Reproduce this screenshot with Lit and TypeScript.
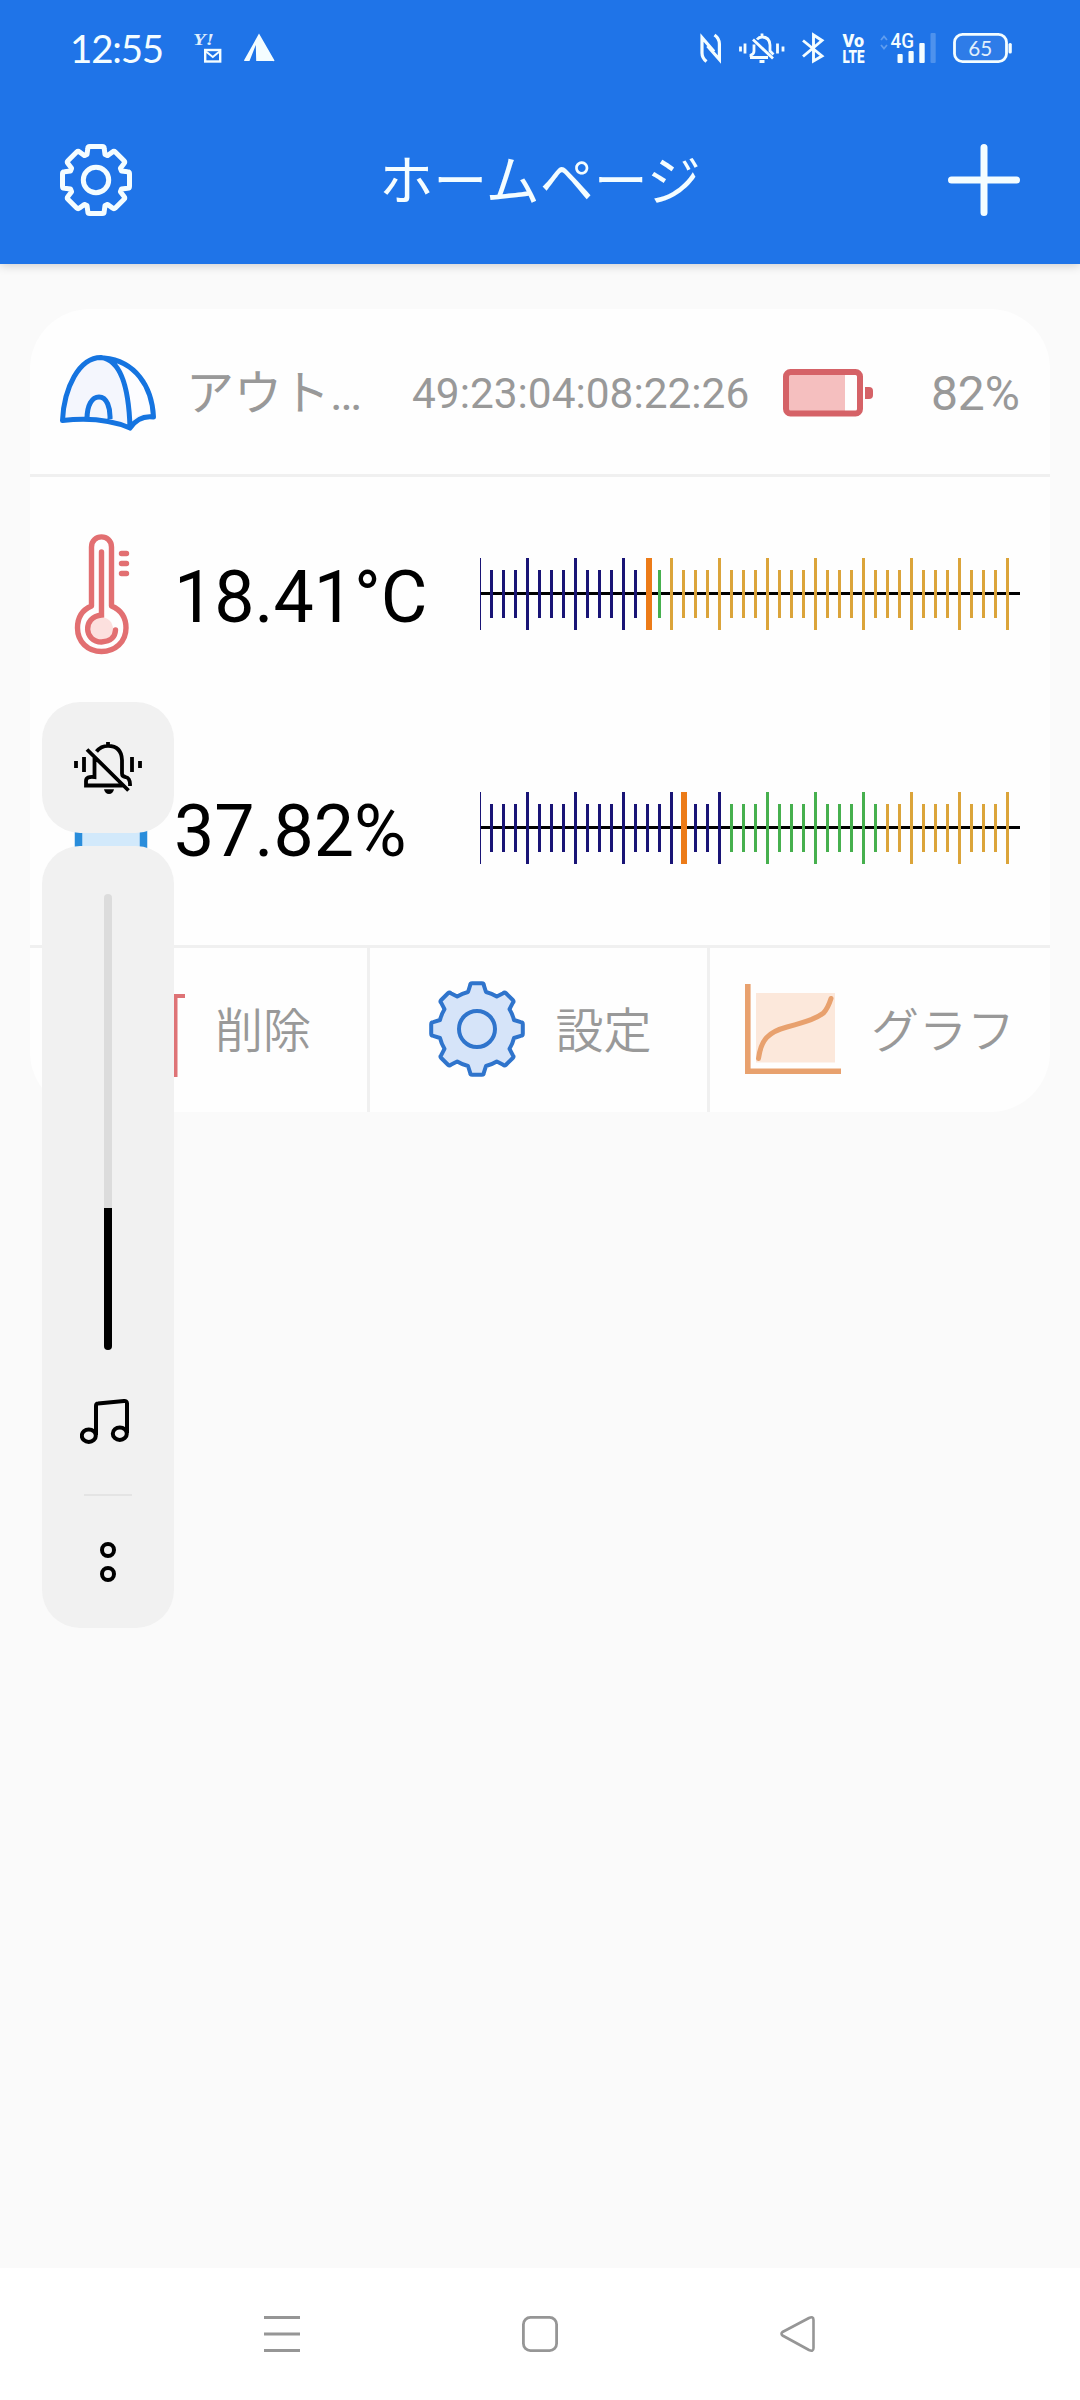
import { LitElement, html, css, svg } from "lit";
import { customElement, property } from "lit/decorators.js";

const TEETH = [0, 45, 90, 135, 180, 225, 270, 315];

/** Outline of an eight-toothed gear around the origin. */
function gearPath(top: number, topHalf: number, base: number, baseHalf: number, arc: boolean): string {
  const at = (x: number, y: number, deg: number) => {
    const a = (deg * Math.PI) / 180;
    const px = x * Math.cos(a) - y * Math.sin(a);
    const py = x * Math.sin(a) + y * Math.cos(a);
    return `${px.toFixed(2)} ${py.toFixed(2)}`;
  };
  const r = Math.hypot(base, baseHalf).toFixed(2);
  const parts = TEETH.map((deg, i) => {
    const start = at(-baseHalf, -base, deg);
    const lead = i === 0 ? `M${start}` : arc ? `A${r} ${r} 0 0 1 ${start}` : `L${start}`;
    return `${lead}L${at(-topHalf, -top + 2, deg)}Q${at(-topHalf, -top, deg)} ${at(-topHalf + 2, -top, deg)}L${at(topHalf - 2, -top, deg)}Q${at(topHalf, -top, deg)} ${at(topHalf, -top + 2, deg)}L${at(baseHalf, -base, deg)}`;
  });
  const close = arc ? `A${r} ${r} 0 0 1 ${at(-baseHalf, -base, 0)}` : "";
  return parts.join("") + close + "Z";
}

@customElement("status-bar")
class StatusBar extends LitElement {
  static styles = css`
    :host { display: block; height: 96px; color: #f4fdff; }
    .bar { display: flex; align-items: center; height: 96px; padding: 0 68px 0 70px; box-sizing: border-box; }
    .time { font: 38.5px/48px Lato, sans-serif; letter-spacing: -1.2px; width: 122px; }
    .right { display: flex; align-items: center; margin-left: auto; }
    svg { display: block; overflow: visible; }
    .tent { margin-left: 21px; }
    .nfc { margin-right: 17px; }
    .bell { margin-right: 17px; }
    .bt { margin-right: 18px; }
    .volte { margin-right: 15px; }
    .signal { margin-right: 17px; }
    .line { fill: none; stroke: currentColor; }
  `;
  render() {
    return html`<div class="bar">
      <span class="time">12:55</span>
      <svg width="30" height="30" viewBox="192 33 30 30" fill="currentColor">
        <text x="193" y="45" font-family="Liberation Serif, serif" font-weight="bold" font-style="italic" font-size="17" textLength="21" lengthAdjust="spacingAndGlyphs" opacity=".9">Y!</text>
        <rect class="line" x="205.2" y="50" width="15" height="11.5" stroke-width="2.4" />
        <path class="line" d="M206 51.5L212.8 57L219.5 51.5" stroke-width="2" />
      </svg>
      <svg class="tent" width="32" height="30" viewBox="243 33 32 30" fill="currentColor">
        <path d="M259 33.5L274.5 60.5Q274 61.5 273 61H256.200L255.800 45L249.500 61H245Q243.500 61 244.500 59.500Z" />
      </svg>
      <div class="right">
        <svg class="nfc line" width="22" height="30" viewBox="700 33 22 30" stroke-width="3.200">
          <path d="M706.500 61.500Q702 58 702 53V37.500L714 51.500M714.500 35Q719.400 38.500 719.400 44V59.500L707.500 46" />
        </svg>
        <svg class="bell line" width="46" height="32" viewBox="739 32 46 32" stroke-width="2.800">
          <path d="M753 39.500L773 58.500M750 57.500H768M751 57V55Q754 54 754 51V44.500M757 39.500Q759 37 762 37Q769.500 37 770 45V51L773.500 54.500M762 33.500V37M745 43.500V53.500M740.500 46.500V51.500M777.500 43.500V53.500M783 46.500V51.500M759.500 61.500H764.500" />
        </svg>
        <svg class="bt line" width="22" height="30" viewBox="802 33 22 30" stroke-width="2.900">
          <path d="M803 40.500L822 56L813.500 61V35L822 40.500L803 56.500" />
        </svg>
        <svg class="volte" width="23" height="32" viewBox="841.500 32 23 32" fill="currentColor" font-family="Roboto, sans-serif" font-weight="900">
          <text x="842" y="47.300" font-size="18.500" textLength="21.500" lengthAdjust="spacingAndGlyphs">Vo</text>
          <text x="842" y="63" font-size="19" textLength="22" lengthAdjust="spacingAndGlyphs">LTE</text>
        </svg>
        <svg class="signal" width="56" height="32" viewBox="879.500 32 56 32" fill="currentColor">
          <path d="M880.500 40L883.500 36.500L886.500 40M880.500 45L883.500 48.500L886.500 45" class="line" stroke-width="1.800" opacity=".3" />
          <text x="890" y="47.800" font-family="Roboto, sans-serif" font-weight="500" font-size="20" textLength="23.500" lengthAdjust="spacingAndGlyphs">4G</text>
          <rect x="897" y="54" width="5.200" height="9" rx="1" /><rect x="908" y="51" width="5.200" height="12" rx="1" />
          <rect x="918.800" y="43" width="5.400" height="20" rx="1" /><rect x="930" y="33" width="5.200" height="30" rx="1" opacity=".22" />
        </svg>
        <svg width="59" height="32" viewBox="952.500 32 59 32" fill="currentColor">
          <rect x="954" y="34.300" width="52" height="27.400" rx="8" fill="#2e7ce8" stroke="currentColor" stroke-width="2.800" />
          <rect x="1008" y="43" width="3.300" height="10.500" rx="1.500" />
          <text x="979.800" y="55.600" text-anchor="middle" font-family="Lato, sans-serif" font-size="22" textLength="24" lengthAdjust="spacingAndGlyphs" opacity=".9">65</text>
        </svg>
      </div>
    </div>`;
  }
}

@customElement("range-gauge")
class RangeGauge extends LitElement {
  /** Index of the first tick in the comfortable zone. */
  @property({ type: Number }) low = 0;
  /** Index of the first tick above the comfortable zone. */
  @property({ type: Number }) high = 0;
  @property({ type: Number }) marker = 0;
  static styles = css`
    :host { display: block; width: 540px; height: 72px; }
    svg { display: block; }
    .cold { fill: #191476; }
    .good { fill: #46b04e; }
    .hot { fill: #dba43a; }
    .marker { fill: #ec7b18; }
  `;
  render() {
    const ticks = Array.from({ length: 45 }, (_, i) => {
      const major = i % 4 === 0;
      const zone = i < this.low ? "cold" : i < this.high ? "good" : "hot";
      return svg`<rect class=${zone} x=${i * 12 - 2} y=${major ? 0 : 12} width="3" height=${major ? 72 : 48} />`;
    });
    return html`<svg width="540" height="72" viewBox="0 0 540 72" shape-rendering="crispEdges">
      <rect y="34" width="540" height="3" />${ticks}
      <rect class="marker" x=${this.marker} y="0" width="6" height="72" />
    </svg>`;
  }
}

@customElement("device-card")
class DeviceCard extends LitElement {
  static styles = css`
    :host { display: block; }
    svg { display: block; flex: none; }
    .card { background: #fefefe; border-radius: 60px; overflow: hidden; color: #999; }
    .head { display: flex; align-items: center; height: 165px; padding: 0 30px; border-bottom: 3px solid #f0f0f0; }
    .name, .mac, .pct { flex: none; white-space: nowrap; padding-top: 5px; }
    .name { width: 190px; margin-left: 30px; font: 48px/60px Roboto, "Noto Sans CJK JP", sans-serif; color: #999; }
    .mac { width: 338px; margin-left: 36px; font: 42.4px/60px Roboto, sans-serif; }
    .battery { margin-left: 33px; padding-top: 2px; }
    .pct { margin-left: auto; font: 48px/60px Roboto, sans-serif; }
    .row { display: flex; align-items: center; height: 234px; padding: 0 30px 0 30px; }
    .value { width: 306px; margin-left: 18px; color: #000; font: 71.700px/90px Roboto, sans-serif; white-space: nowrap; padding-top: 8px; }
    .actions { display: grid; grid-template-columns: 337px 340px 343px; height: 164px; border-top: 3px solid #f0f0f0; }
    .action { display: flex; align-items: center; justify-content: center; gap: 30px; font: 48px/60px "Noto Sans CJK JP", sans-serif; color: #999; }
    .action span { padding-bottom: 6px; font-weight: 350; }
    .action svg { margin-top: -2px; }
    .action:first-child { padding-left: 3px; }
    .action:nth-child(2) { padding-left: 4px; }
    .action + .action { border-left: 3px solid #f0f0f0; }
  `;
  render() {
    return html`<section class="card">
      <header class="head">
        <svg width="96" height="96" viewBox="60 344 96 96" fill="none" stroke="#1574e0" stroke-width="5" stroke-linejoin="round">
          <path d="M62.500 420.500C64 388 79 357.500 101 357.500C135 360 153 386 153.500 417Q139 415 130 428Q102 416 62.500 420.500Z" fill="#f4f6fd" stroke="none" />
          <path d="M117 362C137 369 150 391 151 414Q141 412 132 420C131 396 127 374 117 362Z" fill="#fdfdff" stroke="none" />
          <path d="M104 358C135 361 152 386 153.500 417Q139 415 130 428C129 392 122 360 101 357.500C79 357.500 64 388 62.500 420.500Q102 416 130 428M87 419C87 405 92 397 99 397C107 397 110.500 408 110 419" />
        </svg>
        <span class="name">アウト…</span>
        <span class="mac">49:23:04:08:22:26</span>
        <svg class="battery" width="90" height="48" viewBox="783 369 90 48">
          <rect x="787" y="373" width="58" height="40" fill="#f5bfbf" />
          <rect x="786" y="372" width="74" height="41.500" rx="4.500" fill="none" stroke="#d56267" stroke-width="6" />
          <path d="M865 387H869Q873 387 873 391V395Q873 399 869 399H865Z" fill="#d56267" />
        </svg>
        <span class="pct">82%</span>
      </header>
      <div class="row">
        <svg width="96" height="126" viewBox="60 531 96 126" fill="none" stroke="#e26f71" stroke-width="5.400" stroke-linecap="round">
          <circle cx="101" cy="629" r="12" fill="#fce0de" stroke="none" />
          <path d="M91.500 606V547C91.500 533.500 111.500 533.500 111.500 547V606C121 610 126 618 126 628C126 642 115 651.500 101.500 651.500C88 651.500 77.500 642 77.500 628C77.500 618 82 610 91.500 606Z" stroke-linejoin="round" />
          <path d="M101.500 552V615C82 617 84 642 101.500 642Q115 641 115.500 630" />
          <path d="M121.500 553.500H126.500M121.500 563.500H126.500M121.500 573.500H126.500" />
        </svg>
        <span class="value">18.41°C</span>
        <range-gauge .low=${14} .high=${16} .marker=${166}></range-gauge>
      </div>
      <div class="row">
        <svg width="96" height="96" viewBox="60 780 96 96">
          <path d="M78.500 800V860H143.500V800" fill="#d2e9fb" stroke="#2a8ddb" stroke-width="7.500" stroke-linejoin="round" />
        </svg>
        <span class="value">37.82%</span>
        <range-gauge .low=${21} .high=${34} .marker=${201}></range-gauge>
      </div>
      <div class="actions">
        <div class="action">
          <svg width="96" height="96" viewBox="89 981 96 96" fill="none" stroke="#de7376" stroke-width="4">
            <path d="M89 996H185M99 996V1075H175.500V996M122 1015V1056M152 1015V1056M120 994V983H154V994" />
          </svg>
          <span>削除</span>
        </div>
        <div class="action">
          <svg width="96" height="96" viewBox="-48 -48 96 96" fill="#d6e4f9" stroke="#2f74cc" stroke-width="4" stroke-linejoin="round">
            <path d=${gearPath(45.8, 6.8, 37, 9, true)} />
            <circle r="18" />
          </svg>
          <span>設定</span>
        </div>
        <div class="action">
          <svg width="96" height="96" viewBox="745 981 96 96" fill="none">
            <rect x="756" y="993" width="79" height="69.500" fill="#fce8db" />
            <path d="M747.800 984V1071.300H841" stroke="#e8a16e" stroke-width="5.600" />
            <path d="M758.500 1058.500C761 1040 768 1032 787 1027C809 1021 817 1018 823.500 1013Q828 1008 831 998.500" stroke="#e8a16e" stroke-width="5" stroke-linecap="round" />
          </svg>
          <span>グラフ</span>
        </div>
      </div>
    </section>`;
  }
}

@customElement("volume-panel")
class VolumePanel extends LitElement {
  @property({ type: Number }) level = 31.1;
  static styles = css`
    :host { display: flex; flex-direction: column; gap: 13px; width: 132px; }
    .box { background: #f1f1f1; border-radius: 38px; display: flex; flex-direction: column; align-items: center; box-sizing: border-box; }
    .mute { height: 131px; padding-top: 38px; }
    .slider { height: 782px; padding-top: 48px; }
    .track { display: flex; flex-direction: column; justify-content: flex-end; width: 8px; height: 456px; border-radius: 4px; background: #dcdcdc; overflow: hidden; }
    .level { background: #000; }
    .note { margin-top: 47px; }
    .rule { width: 48px; height: 2px; margin-top: 47px; background: #e4e4e4; }
    .more { margin-top: 46px; }
    svg { display: block; flex: none; }
  `;
  render() {
    return html`
      <div class="box mute">
        <svg width="72" height="56" viewBox="72 740 72 56" fill="none" stroke="#000" stroke-width="3.800">
          <path d="M87 749.500L128.500 790.500M108 742V747M96.500 751.500Q101 745.800 108 745.800Q121.500 746 122 760V773.500Q122 776.500 125.500 777Q130.500 778 130 786M94.500 756V777Q86 776 86 781V785.500H123M76 761V768M84 757V772M132 757V772M140 761V768" />
          <path d="M104 789.300H114Q113 794 109 794Q105 794 104 789.300Z" fill="#000" stroke="none" />
        </svg>
      </div>
      <div class="box slider">
        <div class="track"><div class="level" style="height:${this.level}%"></div></div>
        <svg class="note" width="56" height="50" viewBox="80 1397 56 50" fill="none" stroke="#000" stroke-width="4" stroke-linejoin="round">
          <ellipse cx="88.800" cy="1435.700" rx="7" ry="6.200" /><ellipse cx="119.800" cy="1433.700" rx="7" ry="6.200" />
          <path d="M96 1435V1406Q96 1403.500 98 1403.500L124 1401Q127 1400.800 127 1403.500V1433" />
        </svg>
        <div class="rule"></div>
        <svg class="more" width="20" height="40" viewBox="98 1542 20 40" fill="none" stroke="#000" stroke-width="4">
          <circle cx="108" cy="1550" r="6" /><circle cx="108" cy="1574" r="6" />
        </svg>
      </div>`;
  }
}

@customElement("app-root")
class AppRoot extends LitElement {
  static styles = css`
    :host { display: block; }
    .screen { position: relative; display: flex; flex-direction: column; width: 1080px; height: 2400px; background: #fafafa; overflow: hidden; }
    .top { height: 264px; background: #1f74e8; box-shadow: 0 1px 10px rgba(0, 0, 0, 0.2); }
    .appbar { display: flex; align-items: center; justify-content: space-between; height: 168px; padding: 0 60px; color: #f4fdff; }
    .title { margin: 0; padding-bottom: 5px; font: 54px/80px "Noto Sans CJK JP", sans-serif; }
    svg { display: block; }
    .content { flex: 1; padding: 45px 30px 0; }
    .nav { display: flex; align-items: center; justify-content: space-between; height: 132px; padding: 0 264px; background: #fff; }
    .volume { position: absolute; left: 42px; top: 702px; }
  `;
  render() {
    return html`<div class="screen">
      <header class="top">
        <status-bar></status-bar>
        <div class="appbar">
          <svg width="72" height="72" viewBox="-36 -36 72 72" fill="none" stroke="currentColor" stroke-width="5" stroke-linejoin="round">
            <path d=${gearPath(33.5, 8.2, 25.5, 9, false)} /><circle r="12.700" />
          </svg>
          <h1 class="title">ホームページ</h1>
          <svg width="72" height="72" viewBox="0 0 72 72" stroke="currentColor" stroke-width="7" stroke-linecap="round">
            <path d="M36 3.500V68.500M3.500 36H68.500" />
          </svg>
        </div>
      </header>
      <main class="content"><device-card></device-card></main>
      <footer class="nav">
        <svg width="36" height="36" viewBox="0 0 36 36" stroke="#969696" stroke-width="3"><path d="M0 1.500H36M0 18H36M0 34.500H36" /></svg>
        <svg width="36" height="36" viewBox="0 0 36 36" fill="none" stroke="#969696" stroke-width="2.800"><rect x="1.400" y="1.400" width="33.200" height="33.200" rx="7" /></svg>
        <svg width="36" height="36" viewBox="780 2316 36 36" fill="none" stroke="#969696" stroke-width="2.600" stroke-linejoin="round">
          <path d="M809 2318L782.500 2332Q780.500 2333.800 782.500 2335.500L809 2350Q813.500 2352 813.500 2348V2320Q813.500 2316 809 2318Z" />
        </svg>
      </footer>
      <volume-panel class="volume"></volume-panel>
    </div>`;
  }
}
